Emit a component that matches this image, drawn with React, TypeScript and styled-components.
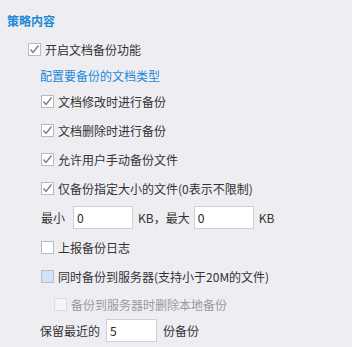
import styled, { createGlobalStyle } from "styled-components";

const Global = createGlobalStyle`
  html, body {
    margin: 0;
    padding: 0;
    background: #eeedf2;
  }
  body {
    font-family: "Noto Sans CJK SC", "Noto Sans", sans-serif;
    font-size: 12px;
    color: #333;
  }
`;

type BoxState = "checked" | "empty" | "blue" | "disabled";

const Box = styled.span<{ $state: BoxState }>`
  box-sizing: border-box;
  width: 13px;
  height: 13px;
  flex: none;
  display: inline-flex;
  align-items: center;
  justify-content: center;
  border: 1px solid
    ${(p) =>
      p.$state === "blue" ? "#a9c1dc" : p.$state === "disabled" ? "#dadae2" : "#b9b9c3"};
  background: ${(p) =>
    p.$state === "blue" ? "#d3e3f5" : p.$state === "disabled" ? "#f5f5f8" : "#fff"};
`;

const CheckBox = ({ state }: { state: BoxState }) => (
  <Box $state={state}>
    {state === "checked" && (
      <svg width="11" height="11" viewBox="0 0 11 11">
        <polyline points="1.5,5.5 4,8.5 9.5,1.5" fill="none" stroke="#7c7c84" strokeWidth="1.4" />
      </svg>
    )}
  </Box>
);

const Page = styled.div`
  padding-top: 5px;
  display: flex;
  flex-direction: column;
`;

const Row = styled.div<{ $h: number; $indent: number }>`
  height: ${(p) => p.$h}px;
  padding-left: ${(p) => p.$indent}px;
  display: flex;
  align-items: center;
  white-space: nowrap;
`;

const Title = styled.span`
  color: #1b8ad6;
  font-weight: bold;
  font-size: 12px;
`;

const SubTitle = styled.span`
  color: #1b8ad6;
  font-size: 12px;
`;

const Label = styled.label<{ $disabled?: boolean }>`
  display: flex;
  align-items: center;
  gap: 4px;
  color: ${(p) => (p.$disabled ? "#9a9aa0" : "#333")};
`;

const Text = styled.span<{ $ml?: number }>`
  margin-left: ${(p) => p.$ml ?? 0}px;
`;

const Input = styled.div<{ $w: number; $ml: number }>`
  box-sizing: border-box;
  width: ${(p) => p.$w}px;
  height: 23px;
  margin-left: ${(p) => p.$ml}px;
  background: #fff;
  border: 1px solid #cfcfd9;
  padding-left: 3px;
  display: flex;
  align-items: center;
  color: #222;
  font-size: 12px;
`;

const Check = ({
  state,
  text,
  disabled,
}: {
  state: BoxState;
  text: string;
  disabled?: boolean;
}) => (
  <Label $disabled={disabled}>
    <CheckBox state={state} />
    <span>{text}</span>
  </Label>
);

export default function App() {
  return (
    <>
      <Global />
      <Page>
        <Row $h={30} $indent={7}>
          <Title>策略内容</Title>
        </Row>
        <Row $h={29} $indent={28}>
          <Check state="checked" text="开启文档备份功能" />
        </Row>
        <Row $h={23} $indent={40}>
          <SubTitle>配置要备份的文档类型</SubTitle>
        </Row>
        <Row $h={29} $indent={41}>
          <Check state="checked" text="文档修改时进行备份" />
        </Row>
        <Row $h={29} $indent={41}>
          <Check state="checked" text="文档删除时进行备份" />
        </Row>
        <Row $h={29} $indent={41}>
          <Check state="checked" text="允许用户手动备份文件" />
        </Row>
        <Row $h={29} $indent={41}>
          <Check state="checked" text="仅备份指定大小的文件(0表示不限制)" />
        </Row>
        <Row $h={28} $indent={41}>
          <Text>最小</Text>
          <Input $w={60} $ml={8}>0</Input>
          <Text $ml={5}>KB，最大</Text>
          <Input $w={60} $ml={4}>0</Input>
          <Text $ml={5}>KB</Text>
        </Row>
        <Row $h={32} $indent={41}>
          <Check state="empty" text="上报备份日志" />
        </Row>
        <Row $h={26} $indent={41}>
          <Check state="blue" text="同时备份到服务器(支持小于20M的文件)" />
        </Row>
        <Row $h={30} $indent={54}>
          <Check state="disabled" text="备份到服务器时删除本地备份" disabled />
        </Row>
        <Row $h={23} $indent={40}>
          <Text>保留最近的</Text>
          <Input $w={51} $ml={6}>5</Input>
          <Text $ml={6}>份备份</Text>
        </Row>
      </Page>
    </>
  );
}
